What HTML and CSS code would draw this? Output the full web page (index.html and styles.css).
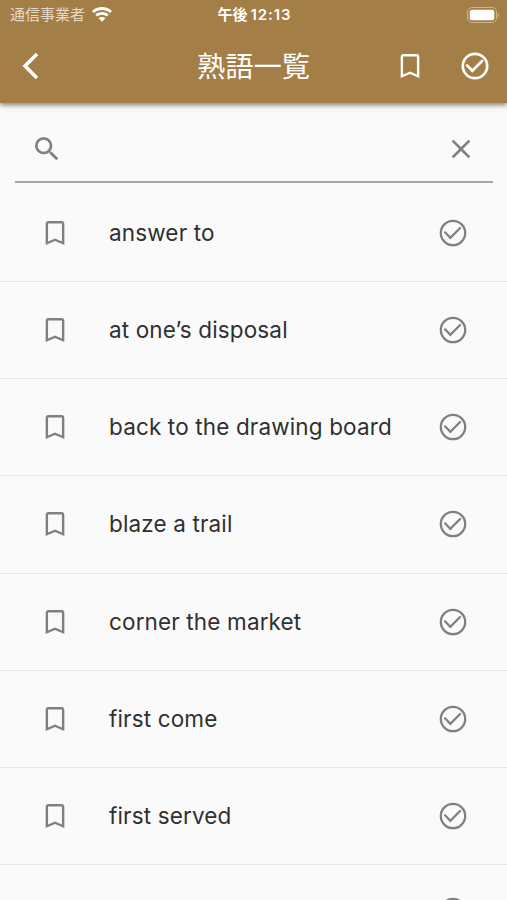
FILE: index.html
```html
<!DOCTYPE html>
<html lang="ja">
<head>
<meta charset="utf-8">
<title>熟語一覧</title>
<link rel="stylesheet" href="styles.css">
</head>
<body>
<svg class="defs" aria-hidden="true">
  <symbol id="bookmark" viewBox="0 0 24 24"><path d="M17 3H7c-1.100 0-2 .9-2 2v16l7-3 7 3V5c0-1.100-.9-2-2-2zm.2 15.300L12 16.100 6.800 18.300V4.800h10.400z"/></symbol>
  <symbol id="check" viewBox="0 0 24 24"><g class="check-lines"><circle cx="12" cy="12" r="9.150"/><path d="m6 11.500 4 4.100 7.300-7.300"/></g></symbol>
</svg>
<header class="header">
  <div class="status">
    <div class="carrier"><span>通信事業者</span>
      <svg class="wifi" viewBox="0 0 20 15"><path d="M10 0C6 0 2.600 1.500 0 4l2 2.100C4.200 4 7 2.900 10 2.900S15.800 4 18 6.100L20 4C17.400 1.500 14 0 10 0zM10 5C7.300 5 5 6 3.300 7.600l2 2C6.600 8.500 8.200 7.800 10 7.800s3.400.7 4.700 1.800l2-2C15 6 12.700 5 10 5zM10 10c-1.300 0-2.500.5-3.400 1.200L10 14.700l3.400-3.500C12.500 10.500 11.300 10 10 10z"/></svg>
    </div>
    <div class="time"><span>午後</span><span>12:13</span></div>
    <svg class="battery" viewBox="0 0 32 16"><rect class="shell" x=".5" y=".5" width="29" height="15" rx="4.500"/><rect x="2.700" y="2.700" width="24.600" height="10.600" rx="2.500"/><path class="tip" d="M30.700 5.500q1.300 1 1.300 2.500t-1.300 2.500z"/></svg>
  </div>
  <div class="bar">
    <svg class="back" viewBox="0 0 18 28"><path d="M15 2 3 14l12 12"/></svg>
    <h1>熟語一覧</h1>
    <svg class="icon"><use href="#bookmark"/></svg>
    <svg class="icon bold"><use href="#check"/></svg>
  </div>
</header>
<main>
  <div class="search">
    <svg class="icon" viewBox="0 0 24 24"><path d="M15.500 14h-.79l-.28-.27A6.470 6.470 0 0 0 16 9.500 6.500 6.500 0 1 0 9.500 16c1.610 0 3.090-.59 4.230-1.570l.27.28v.79l5 4.990L20.490 19zm-6 0a4.500 4.500 0 1 1 0-9 4.500 4.500 0 0 1 0 9z"/></svg>
    <svg class="icon" viewBox="0 0 24 24"><path d="M19 6.410 17.590 5 12 10.590 6.410 5 5 6.410 10.590 12 5 17.590 6.410 19 12 13.410 17.590 19 19 17.590 13.410 12z"/></svg>
  </div>
  <ul class="list">
    <li><svg class="icon"><use href="#bookmark"/></svg><span>answer to</span><svg class="icon"><use href="#check"/></svg></li>
    <li><svg class="icon"><use href="#bookmark"/></svg><span>at one’s disposal</span><svg class="icon"><use href="#check"/></svg></li>
    <li><svg class="icon"><use href="#bookmark"/></svg><span>back to the drawing board</span><svg class="icon"><use href="#check"/></svg></li>
    <li><svg class="icon"><use href="#bookmark"/></svg><span>blaze a trail</span><svg class="icon"><use href="#check"/></svg></li>
    <li><svg class="icon"><use href="#bookmark"/></svg><span>corner the market</span><svg class="icon"><use href="#check"/></svg></li>
    <li><svg class="icon"><use href="#bookmark"/></svg><span>first come</span><svg class="icon"><use href="#check"/></svg></li>
    <li><svg class="icon"><use href="#bookmark"/></svg><span>first served</span><svg class="icon"><use href="#check"/></svg></li>
    <li class="last"><svg class="icon"><use href="#check"/></svg></li>
  </ul>
</main>
</body>
</html>
```
FILE: styles.css
```css
* { box-sizing: border-box; }
body { margin: 0; height: 900px; overflow: hidden; background: #fafafa; color: #303030; font-family: Inter, "Noto Sans CJK JP", sans-serif; display: flex; flex-direction: column; }
.defs { position: absolute; width: 0; height: 0; }
svg { display: block; flex: none; fill: currentColor; }
.header { flex: none; position: relative; height: 103px; background: #a47e47; color: #fff; box-shadow: 0 2px 5px rgba(0,0,0,.5); }
.status { height: 29px; display: grid; grid-template-columns: 1fr auto 1fr; align-items: center; padding: 0 8px 0 10px; }
.carrier { display: flex; align-items: center; gap: 7px; font-size: 15px; line-height: 20px; color: #e4d8c8; }
.wifi { width: 20px; height: 15px; color: #fff; }
.time { display: flex; gap: 3px; font-size: 15px; line-height: 20px; font-weight: 600; letter-spacing: .9px; }
.time span:first-child { letter-spacing: 0; }
.battery { width: 32px; height: 16px; justify-self: end; }
.shell { fill: none; stroke: #cbb48f; }
.tip { fill: #cbb48f; }
.bar { height: 74px; display: grid; grid-template-columns: 129px 1fr 64px 65px; align-items: center; justify-items: center; }
.back { width: 18px; height: 28px; margin-left: 22px; justify-self: start; fill: none; stroke: #fff; stroke-width: 3.600; }
h1 { margin: 0; font-size: 28.300px; line-height: 40px; font-weight: 400; padding-top: 2px; }
.icon { width: 32px; height: 32px; }
.check-lines { fill: none; stroke: currentColor; stroke-width: inherit; stroke-linecap: round; }
.list .icon { color: #808080; stroke-width: 1.700; }
.bold { stroke-width: 2; }
main { flex: 1; min-height: 0; overflow: hidden; }
.search { height: 80px; margin: 0 14px 0 15px; padding: 14px 16px 0; border-bottom: 2px solid #a6a6a6; display: flex; align-items: center; justify-content: space-between; color: #808080; }
.list { list-style: none; margin: 0; padding: 2px 0 0; }
.list li { height: 97.150px; display: grid; grid-template-columns: 70px 1fr 32px; align-items: center; padding: 0 38px 0 39px; border-bottom: 1px solid #e8e8e8; }
.list .last { height: 35px; overflow: hidden; padding-top: 30px; border: 0; align-items: start; }
.last .icon { grid-column: 3; }
.list span { font-size: 22.500px; line-height: 32px; letter-spacing: .14px; white-space: nowrap; }
```
